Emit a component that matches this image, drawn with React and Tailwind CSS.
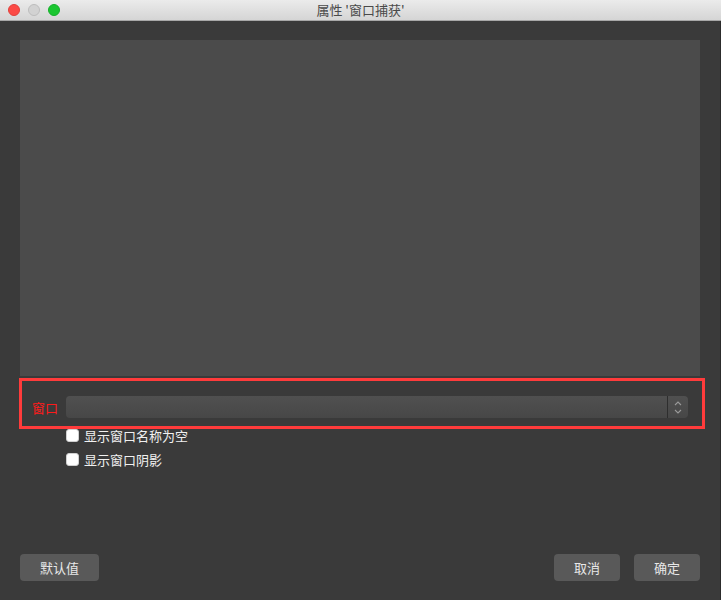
import React from "react";

const cjk = { fontFamily: '"Noto Sans CJK SC", "Noto Sans", sans-serif' };

function Check({ label }) {
  return (
    <div className="flex items-center h-[24px]">
      <div className="w-[13px] h-[13px] rounded-[3px] bg-white border border-[#d0d0d0]" />
      <span className="ml-[5px] text-[13px] leading-none text-[#f0f0f0]">{label}</span>
    </div>
  );
}

function Btn({ children, w }) {
  return (
    <div className={`${w} h-[27px] rounded-[4px] bg-[#595959] flex items-center justify-center text-[13px] text-[#e8e8e8]`}>
      {children}
    </div>
  );
}

export default function App() {
  return (
    <div className="w-[721px] h-[600px] bg-[#3a3a3a] flex flex-col overflow-hidden relative" style={cjk}>
      {/* title bar */}
      <div className="h-[21px] shrink-0 bg-gradient-to-b from-[#ebebeb] to-[#d5d5d5] border-b border-[#a8a8a8] flex items-center relative">
        <div className="flex items-center gap-[8px] pl-[8px]">
          <div className="w-[12px] h-[12px] rounded-full bg-[#fc4a45] border border-[#e0413c]" />
          <div className="w-[12px] h-[12px] rounded-full bg-[#d2d2d2] border border-[#bdbdbd]" />
          <div className="w-[12px] h-[12px] rounded-full bg-[#1bc631] border border-[#14b02a]" />
        </div>
        <div className="absolute inset-0 flex items-center justify-center text-[13px] text-[#4a4a4a]">
          属性 '窗口捕获'
        </div>
      </div>

      {/* body */}
      <div className="flex-1 flex flex-col pt-[19px]">
        <div className="ml-[20px] w-[680px] h-[336px] bg-[#4b4b4b]" />

        <div className="ml-[19px] mt-[2px] w-[686px] h-[51px] border-[3px] border-[#ff3b3b] flex items-center pl-[10px] pt-[7px]">
          <span className="w-[26px] text-[13px] leading-none text-[#ff1a1a]">窗口</span>
          <div className="ml-[8px] flex-1 mr-[14px] h-[22px] rounded-[4px] bg-gradient-to-b from-[#505050] to-[#474747] flex">
            <div className="flex-1" />
            <div className="w-[21px] border-l border-[#2e2e2e] flex flex-col items-center justify-center gap-[3px]">
              <svg width="8" height="5" viewBox="0 0 8 5"><path d="M1 4 L4 1 L7 4" fill="none" stroke="#9a9a9a" strokeWidth="1.1" /></svg>
              <svg width="8" height="5" viewBox="0 0 8 5"><path d="M1 1 L4 4 L7 1" fill="none" stroke="#9a9a9a" strokeWidth="1.1" /></svg>
            </div>
          </div>
        </div>

        <div className="ml-[66px] mt-[-6px] flex flex-col">
          <Check label="显示窗口名称为空" />
          <Check label="显示窗口阴影" />
        </div>

        <div className="mt-auto mb-[19px] flex items-center px-[20px] pr-[21px]">
          <Btn w="w-[79px]">默认值</Btn>
          <div className="flex-1" />
          <Btn w="w-[66px]">取消</Btn>
          <div className="w-[14px]" />
          <Btn w="w-[66px]">确定</Btn>
        </div>
      </div>
      <div className="absolute right-0 top-[21px] bottom-0 w-[1px] bg-[#2c2c2c]" />
    </div>
  );
}
